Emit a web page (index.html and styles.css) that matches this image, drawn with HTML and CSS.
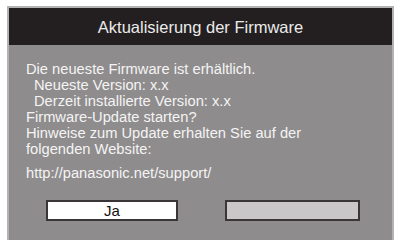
FILE: index.html
```html
<!DOCTYPE html>
<html>
<head>
<meta charset="utf-8">
<link rel="stylesheet" href="styles.css">
</head>
<body>
<div class="frame">
  <div class="title">Aktualisierung der Firmware</div>
  <div class="content">
    <div class="line">Die neueste Firmware ist erhältlich.</div>
    <div class="line indent">Neueste Version: x.x</div>
    <div class="line indent">Derzeit installierte Version: x.x</div>
    <div class="line">Firmware-Update starten?</div>
    <div class="line">Hinweise zum Update erhalten Sie auf der</div>
    <div class="line">folgenden Website:</div>
    <div class="line url">http://panasonic.net/support/</div>
    <div class="buttons">
      <div class="btn btn-yes">Ja</div>
      <div class="btn btn-no"></div>
    </div>
  </div>
</div>
</body>
</html>
```
FILE: styles.css
```css
html, body {
  margin: 0;
  padding: 0;
  background: #ffffff;
  width: 396px;
  height: 240px;
  overflow: hidden;
}
body {
  padding: 6px 0 0 7px;
  box-sizing: border-box;
  font-family: "Liberation Sans", Arial, sans-serif;
}
.frame {
  width: 387px;
  height: 240px;
  box-sizing: border-box;
  border: 2px solid #b4b2b3;
  border-bottom: none;
  background: #8f8c8d;
}
.title {
  height: 37px;
  background: #231f20;
  color: #ebebeb;
  font-size: 16.5px;
  line-height: 37px;
  text-align: center;
  padding-top: 1px;
  box-sizing: border-box;
}
.content {
  padding: 16px 0 0 17px;
  color: #f4f4f4;
  font-size: 14.7px;
}
.line {
  line-height: 16px;
  height: 16px;
  white-space: nowrap;
}
.indent {
  padding-left: 8px;
}
.url {
  margin-top: 8px;
}
.buttons {
  display: flex;
  gap: 47px;
  margin-top: 19px;
  padding-left: 20px;
}
.btn {
  height: 21px;
  box-sizing: border-box;
  border: 2px solid #3a3637;
  color: #111;
  font-size: 15px;
  line-height: 17px;
  text-align: center;
}
.btn-yes {
  width: 132px;
  background: #ffffff;
}
.btn-no {
  width: 135px;
  background: #c9c7c8;
}
```
